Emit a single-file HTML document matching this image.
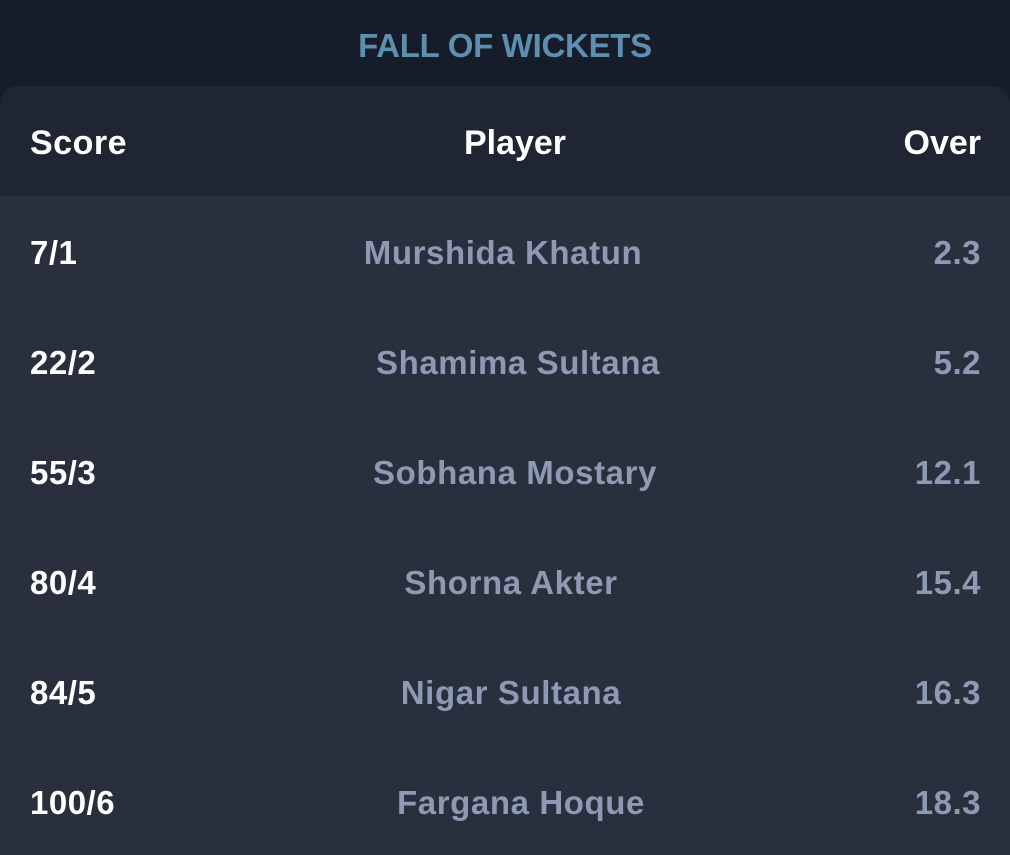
<!DOCTYPE html>
<html><head><style>
html,body{margin:0;width:1010px;height:855px;background:#161c2a;overflow:hidden;font-family:"Liberation Sans",sans-serif;}
.title{position:absolute;top:27px;left:0;width:1010px;text-align:center;color:#5d8fae;font-weight:bold;font-size:33px;letter-spacing:-0.3px;}
.card{position:absolute;top:86px;left:0;width:1010px;height:769px;border-radius:18px 18px 0 0;overflow:hidden;background:#292f3c;}
.head{height:110px;background:#1f2533;position:relative;}
.row{height:110px;position:relative;}
.t{position:absolute;top:50%;transform:translateY(-45%);font-size:33px;font-weight:bold;line-height:40px;white-space:nowrap;}
.w{color:#fff;}
.s{left:30px;color:#fff;letter-spacing:0.5px;}
.o{right:29px;color:#8e99b3;letter-spacing:0.5px;}
.n{color:#8e99b3;transform:translate(-50%,-45%);letter-spacing:0.6px;font-size:33px;}
</style></head><body>
<div class="title">FALL OF WICKETS</div>
<div class="card">
<div class="head"><span class="t s" style="font-size:34px">Score</span><span class="t w" style="left:515px;transform:translate(-50%,-45%);font-size:34px">Player</span><span class="t w" style="right:29px;font-size:34px">Over</span></div>
<div class="row"><span class="t s">7/1</span><span class="t n" style="left:503px">Murshida Khatun</span><span class="t o">2.3</span></div>
<div class="row"><span class="t s">22/2</span><span class="t n" style="left:518px">Shamima Sultana</span><span class="t o">5.2</span></div>
<div class="row"><span class="t s">55/3</span><span class="t n" style="left:515px">Sobhana Mostary</span><span class="t o">12.1</span></div>
<div class="row"><span class="t s">80/4</span><span class="t n" style="left:511px">Shorna Akter</span><span class="t o">15.4</span></div>
<div class="row"><span class="t s">84/5</span><span class="t n" style="left:511px">Nigar Sultana</span><span class="t o">16.3</span></div>
<div class="row"><span class="t s">100/6</span><span class="t n" style="left:521px">Fargana Hoque</span><span class="t o">18.3</span></div>
</div>
</body></html>
